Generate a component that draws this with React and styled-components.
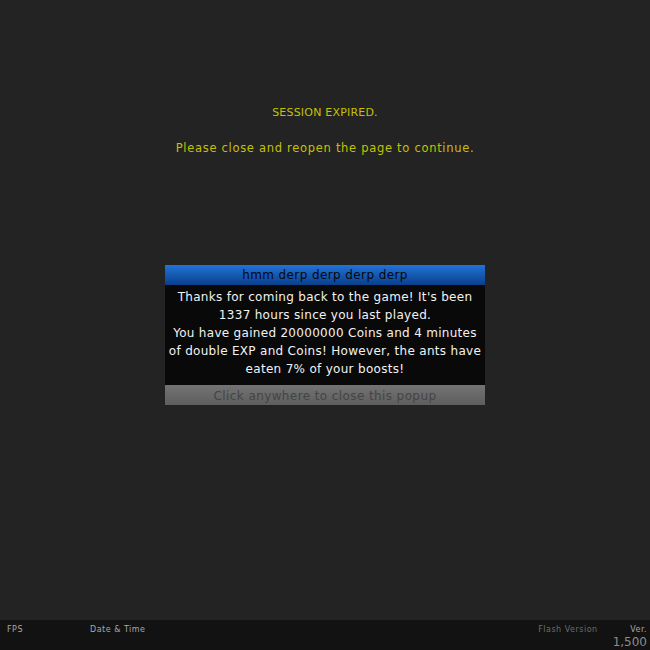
import React from "react";
import styled, { createGlobalStyle } from "styled-components";

const Global = createGlobalStyle`
  html, body { margin: 0; padding: 0; background: #232323; }
  body { font-family: "DejaVu Sans", "Liberation Sans", sans-serif; }
  #root { height: 650px; }
`;

const Page = styled.div`
  height: 650px;
  display: flex;
  flex-direction: column;
  background: #232323;
`;

const Main = styled.div`
  flex: 1;
  display: flex;
  flex-direction: column;
  align-items: center;
  padding-top: 105px;
`;

const Notice = styled.div`
  color: #c4c200;
  font-size: ${(p) => p.size || 11}px;
  line-height: 16px;
  text-align: center;
  margin-bottom: ${(p) => p.gap || 0}px;
  letter-spacing: ${(p) => p.ls || 0.2}px;
`;

const Popup = styled.div`
  margin-top: 109px;
  width: 320px;
  display: flex;
  flex-direction: column;
`;

const PopupHeader = styled.div`
  height: 20px;
  background: linear-gradient(#1f74d6, #0b3f8c);
  color: #07070c;
  font-size: 12px;
  line-height: 21px;
  text-align: center;
  letter-spacing: 0.4px;
`;

const PopupBody = styled.div`
  background: #090909;
  color: #f2f2f2;
  font-size: 12px;
  line-height: 18px;
  text-align: center;
  padding: 3px 0 7px;
  letter-spacing: 0.3px;
  white-space: nowrap;
`;

const PopupFooter = styled.div`
  height: 20px;
  background: linear-gradient(#737373, #5e5e5e);
  color: #444444;
  font-size: 12px;
  line-height: 22px;
  text-align: center;
  letter-spacing: 0.4px;
`;

const Bar = styled.div`
  height: 30px;
  background: #121212;
  display: flex;
  align-items: flex-start;
  padding: 5px 3px 0 7px;
  box-sizing: border-box;
  font-size: 8px;
`;

const BarLabel = styled.div`
  color: ${(p) => (p.dim ? "#6c6c6c" : "#a8a8a8")};
  width: ${(p) => (p.w ? p.w + "px" : "auto")};
  line-height: 10px;
  letter-spacing: 0.5px;
`;

const Spacer = styled.div`
  flex: 1;
`;

const Version = styled.div`
  display: flex;
  flex-direction: column;
  align-items: flex-end;
  margin-left: 15px;
`;

const VerNum = styled.div`
  font-size: 12px;
  line-height: 14px;
  color: #8c8c8c;
`;

export default function App() {
  return (
    <>
      <Global />
      <Page>
        <Main>
          <Notice size={11} gap={19}>SESSION EXPIRED.</Notice>
          <Notice size={11.5} ls={0.7}>Please close and reopen the page to continue.</Notice>
          <Popup>
            <PopupHeader>hmm derp derp derp derp</PopupHeader>
            <PopupBody>
              Thanks for coming back to the game! It's been
              <br />
              1337 hours since you last played.
              <br />
              You have gained 20000000 Coins and 4 minutes
              <br />
              of double EXP and Coins! However, the ants have
              <br />
              eaten 7% of your boosts!
            </PopupBody>
            <PopupFooter>Click anywhere to close this popup</PopupFooter>
          </Popup>
        </Main>
        <Bar>
          <BarLabel w={83}>FPS</BarLabel>
          <BarLabel>Date &amp; Time</BarLabel>
          <Spacer />
          <BarLabel dim>Flash Version</BarLabel>
          <Version>
            <BarLabel>Ver.</BarLabel>
            <VerNum>1,500</VerNum>
          </Version>
        </Bar>
      </Page>
    </>
  );
}
